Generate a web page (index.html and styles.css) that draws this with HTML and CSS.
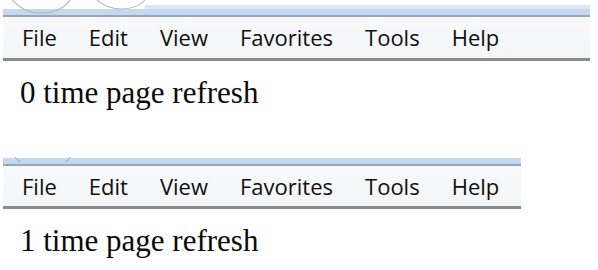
FILE: index.html
```html
<!DOCTYPE html>
<html>
<head>
<meta charset="utf-8">
<link rel="stylesheet" href="styles.css">
</head>
<body>
<div class="shot shot-one">
  <div class="window wide">
    <svg class="chrome" width="587" height="17" viewBox="0 0 587 17" preserveAspectRatio="none">
      <rect x="0" y="9" width="587" height="6" fill="#c6d8ef"/>
      <rect x="142" y="5" width="445" height="4" fill="#dce7f5"/>
      <rect x="0" y="15" width="587" height="2" fill="#97a6bb"/>
      <path d="M9 0 Q22 14 38 13 Q58 13 67 0" fill="none" stroke="#a9b1bd" stroke-width="1.1"/>
      <path d="M94 0 Q104 9 119 9 Q134 9 142 0" fill="none" stroke="#b3bbc6" stroke-width="1.1"/>
    </svg>
    <nav class="menu">
      <span class="item">File</span>
      <span class="item">Edit</span>
      <span class="item">View</span>
      <span class="item">Favorites</span>
      <span class="item">Tools</span>
      <span class="item">Help</span>
    </nav>
  </div>
  <p class="note">0 time page refresh</p>
</div>
<div class="shot shot-two">
  <div class="window narrow">
    <svg class="chrome" width="518" height="16" viewBox="0 0 518 16" preserveAspectRatio="none">
      <rect x="0" y="8" width="518" height="6" fill="#c6d8ef"/>
      <rect x="0" y="14" width="518" height="2" fill="#97a6bb"/>
      <path d="M12 7 Q15 11 18 12" fill="none" stroke="#a9b1bd" stroke-width="1.1"/>
      <path d="M62 12 Q65 11 67 7" fill="none" stroke="#a9b1bd" stroke-width="1.1"/>
    </svg>
    <nav class="menu">
      <span class="item">File</span>
      <span class="item">Edit</span>
      <span class="item">View</span>
      <span class="item">Favorites</span>
      <span class="item">Tools</span>
      <span class="item">Help</span>
    </nav>
  </div>
  <p class="note">1 time page refresh</p>
</div>
</body>
</html>
```
FILE: styles.css
```css
html, body {
  margin: 0;
  padding: 0;
  background: #ffffff;
}
body {
  width: 598px;
  height: 270px;
  overflow: hidden;
}
.shot {
  display: flex;
  flex-direction: column;
}
.shot-two {
  margin-top: 39px;
}
.window {
  margin-left: 3px;
  display: flex;
  flex-direction: column;
}
.wide {
  width: 587px;
}
.narrow {
  width: 518px;
}
.chrome {
  display: block;
}
.menu {
  display: flex;
  gap: 32px;
  padding: 5px 0 6px 19px;
  background: linear-gradient(#f8f9fb, #f4f5f7);
  border-bottom: 3px solid #8b8b8b;
  font-family: "Open Sans", "Noto Sans", sans-serif;
  font-size: 22px;
  line-height: 30px;
  color: #0f0f0f;
}
.shot-two .menu {
  padding-top: 5px;
  padding-bottom: 5px;
}
.note {
  margin: 14px 0 0 20px;
  font-family: "Liberation Serif", "Times New Roman", serif;
  font-size: 31px;
  line-height: 36px;
  color: #0a0a0a;
}
.shot-two .note {
  margin-top: 14px;
}
```
